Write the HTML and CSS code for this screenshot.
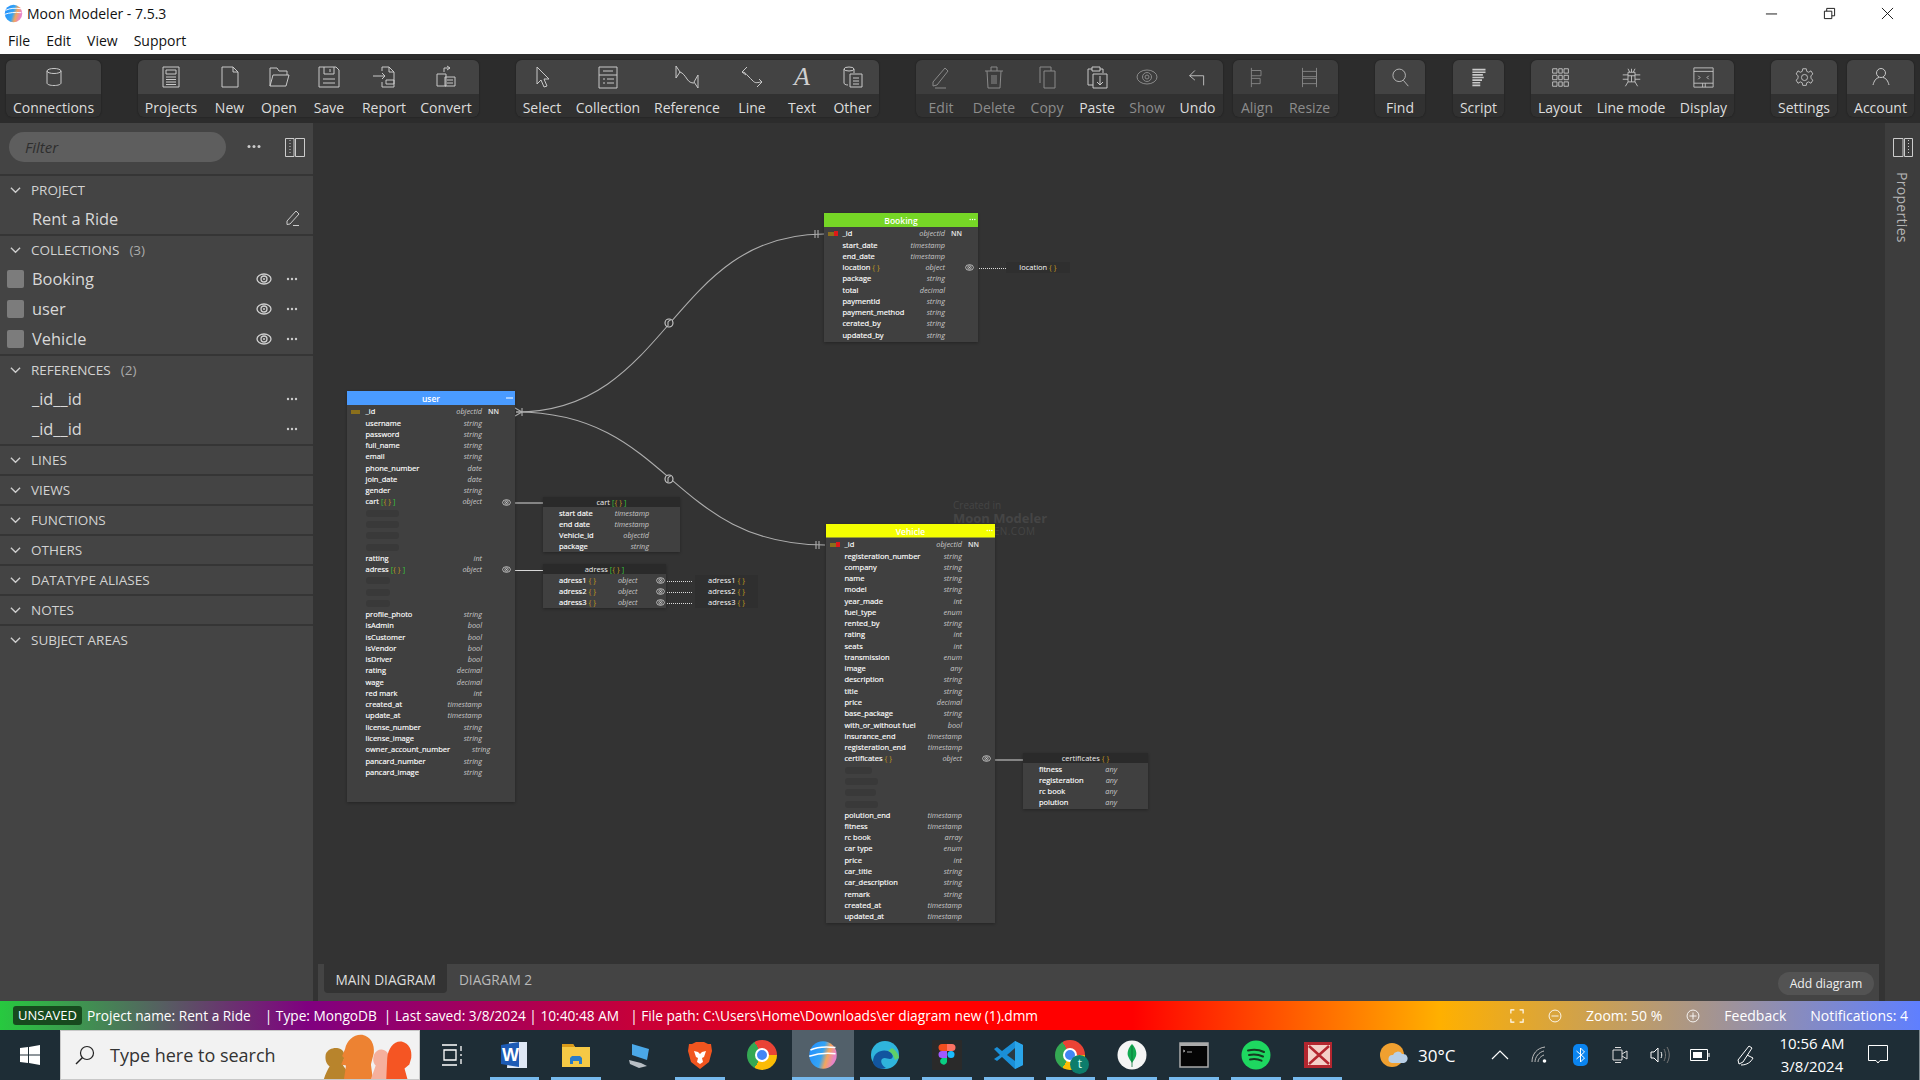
FILE: index.html
```html
<!DOCTYPE html>
<html lang="en">
<head>
    <meta charset="UTF-8">
    <meta name="viewport" content="width=device-width, initial-scale=1.0">
    <title>Moon Modeler - 7.5.3</title>
    <link rel="stylesheet" href="styles.css">
</head>
<body>
    <svg class="defs" width="0" height="0">
        <defs>
            <linearGradient id="moon-a" x1="0" y1="0" x2="1" y2="0.3">
                <stop offset="0" stop-color="#1f8dff"/>
                <stop offset="0.55" stop-color="#35a4f4"/>
                <stop offset="0.75" stop-color="#f3a65c"/>
                <stop offset="1" stop-color="#e884c8"/>
            </linearGradient>
            <symbol id="moon" viewBox="0 0 24 24">
                <circle cx="12" cy="12" r="11" fill="url(#moon-a)"/>
                <path d="M2 8c6-3 12-3 20-2M1 13c6-2 12-3 21-2" stroke="#fff" stroke-width="1.2" fill="none"/>
            </symbol>
            <symbol id="eye" viewBox="0 0 16 12">
                <ellipse cx="8" cy="6" rx="7" ry="5" fill="none" stroke="currentColor" stroke-width="1.3"/>
                <circle cx="8" cy="6" r="3" fill="none" stroke="currentColor" stroke-width="1.3"/>
                <circle cx="8" cy="6" r="1" fill="currentColor"/>
            </symbol>
            <symbol id="dots" viewBox="0 0 12 4">
                <circle cx="2" cy="2" r="1.2" fill="currentColor"/>
                <circle cx="6" cy="2" r="1.2" fill="currentColor"/>
                <circle cx="10" cy="2" r="1.2" fill="currentColor"/>
            </symbol>
            <symbol id="chev" viewBox="0 0 12 8">
                <path d="M1 1.5l5 5 5-5" fill="none" stroke="currentColor" stroke-width="1.5"/>
            </symbol>
        </defs>
    </svg>

    <div class="titlebar">
        <svg class="app-logo"><use href="#moon"/></svg>
        <span class="app-title">Moon Modeler - 7.5.3</span>
        <div class="win-btns">
            <svg class="win-btn" viewBox="0 0 14 14"><path d="M1 7.5h12" stroke="#111"/></svg>
            <svg class="win-btn" viewBox="0 0 14 14"><path d="M1.5 4.5h8v8h-8zM4 4.5V1.5h8.500v8h-3" fill="none" stroke="#111"/></svg>
            <svg class="win-btn" viewBox="0 0 14 14"><path d="M1 1l12 12M13 1L1 13" stroke="#111"/></svg>
        </div>
    </div>
    <div class="menubar">
        <span>File</span><span>Edit</span><span>View</span><span>Support</span>
    </div>

    <div class="toolbar">
        <div class="group g1">
            <div class="tool"><span class="tool-ic"><svg viewBox="0 0 24 24"><ellipse cx="12" cy="6" rx="7" ry="2.500"/><path d="M5 6v12c0 1.500 3 2.500 7 2.500s7-1 7-2.500V6"/></svg></span><span class="tool-lb">Connections</span></div>
        </div>
        <div class="group g2">
            <div class="tool"><span class="tool-ic"><svg viewBox="0 0 24 24"><path d="M4 2h16v20H4zM7 5h10v4H7zM7 12h10M7 14.500h10M7 17h10M7 19.500h10"/></svg></span><span class="tool-lb">Projects</span></div>
            <div class="tool"><span class="tool-ic"><svg viewBox="0 0 24 24"><path d="M4 2h11l5 5v15H4zM15 2v5h5"/></svg></span><span class="tool-lb">New</span></div>
            <div class="tool"><span class="tool-ic"><svg viewBox="0 0 24 24"><path d="M3 21V3h7l2 3h8v4M3 21l3-11h16l-3 11z"/></svg></span><span class="tool-lb">Open</span></div>
            <div class="tool"><span class="tool-ic"><svg viewBox="0 0 24 24"><path d="M2 2h17l3 3v17H2zM7 2v7h10V2M13 4v3M6 14h12M6 18h12"/></svg></span><span class="tool-lb">Save</span></div>
            <div class="tool"><span class="tool-ic"><svg viewBox="0 0 24 24"><path d="M10 6V2h7l5 5v15H10v-5M17 2v5h5M1 11h12M10 8l3 3-3 3M14 15h8v4h-8z"/></svg></span><span class="tool-lb">Report</span></div>
            <div class="tool"><span class="tool-ic"><svg viewBox="0 0 24 24"><path d="M10 7V3h6M13 1l3 2-3 2M3 9h9v12H3zM11 12h10v9H11zM13 15h6M13 18h6"/></svg></span><span class="tool-lb">Convert</span></div>
        </div>
        <div class="group g3">
            <div class="tool"><span class="tool-ic"><svg viewBox="0 0 24 24"><path d="M7 2v17l4-4 3 7 3-1-3-7h5z"/></svg></span><span class="tool-lb">Select</span></div>
            <div class="tool"><span class="tool-ic"><svg viewBox="0 0 24 24"><path d="M3 2h18v21H3zM7 6h10M3 10h18M7 14h2M11 14h7M7 18h2M11 18h7"/></svg></span><span class="tool-lb">Collection</span></div>
            <div class="tool"><span class="tool-ic"><svg class="ic-wide" viewBox="0 0 30 24"><path d="M4 1v12l4-6-4-6M8 7c3 1 5 4 7 7s4 4 7 4M26 10v13l-4-6 4-7"/></svg></span><span class="tool-lb">Reference</span></div>
            <div class="tool"><span class="tool-ic"><svg viewBox="0 0 24 24"><path d="M7 2L2 7l4 3M2 7c3 0 4 2 6 4s3 3 5 5 3 2 8 1M17 22l5-5-3-3"/></svg></span><span class="tool-lb">Line</span></div>
            <div class="tool"><span class="tool-ic"><span class="ic-a">A</span></span><span class="tool-lb">Text</span></div>
            <div class="tool"><span class="tool-ic"><svg viewBox="0 0 24 24"><ellipse cx="8" cy="4" rx="5" ry="2"/><path d="M3 4v14c0 1 1.500 2 4 2M13 4v4M9 9h12v13H9zM12 13h6M12 16h6M12 19h6"/></svg></span><span class="tool-lb">Other</span></div>
        </div>
        <div class="group g4">
            <div class="tool off"><span class="tool-ic"><svg viewBox="0 0 24 24"><path d="M4 17L16 3l3 3L8 20l-4 1zM6 23h11"/></svg></span><span class="tool-lb">Edit</span></div>
            <div class="tool off"><span class="tool-ic"><svg viewBox="0 0 24 24"><path d="M3 6h18M9 6V2h6v4M5 6l1 17h12l1-17M10 10v9M12 10v9M14 10v9"/></svg></span><span class="tool-lb">Delete</span></div>
            <div class="tool off"><span class="tool-ic"><svg viewBox="0 0 24 24"><path d="M5 18V2h11v4M9 6h11v17H9z"/></svg></span><span class="tool-lb">Copy</span></div>
            <div class="tool plain"><span class="tool-ic"><svg viewBox="0 0 24 24"><path d="M8 20H3V4h4M15 4h3v4M7 2h8v4H7zM8 9h14v14H8zM15 11v9M12 17l3 3 3-3"/></svg></span><span class="tool-lb">Paste</span></div>
            <div class="tool off"><span class="tool-ic"><svg viewBox="0 0 24 24"><ellipse cx="12" cy="12" rx="10" ry="7"/><circle cx="12" cy="12" r="4.500"/><circle cx="12" cy="12" r="2"/></svg></span><span class="tool-lb">Show</span></div>
            <div class="tool plain"><span class="tool-ic"><svg class="ic-sm" viewBox="0 0 24 24"><path d="M9 4L3 10l6 5M3 10h16v11"/></svg></span><span class="tool-lb">Undo</span></div>
        </div>
        <div class="group g5">
            <div class="tool off"><span class="tool-ic"><svg class="ic-sm" viewBox="0 0 24 24"><path d="M5 1v22M5 4h11v6H5M5 13h10v6H5"/></svg></span><span class="tool-lb">Align</span></div>
            <div class="tool off"><span class="tool-ic"><svg class="ic-sm" viewBox="0 0 24 24"><path d="M4 1v22M20 1v22M4 5h16v6H4M4 13h16v6H4"/></svg></span><span class="tool-lb">Resize</span></div>
        </div>
        <div class="group g6">
            <div class="tool"><span class="tool-ic"><svg class="ic-xs" viewBox="0 0 24 24"><circle cx="11" cy="10" r="7.500"/><path d="M16 16l6 7"/></svg></span><span class="tool-lb">Find</span></div>
        </div>
        <div class="group g7">
            <div class="tool"><span class="tool-ic"><svg class="ic-sm" viewBox="0 0 24 24"><path class="thick" d="M5 3h15M5 6h15M5 9h12M5 12h13M5 15h11M5 18h9M5 21h9"/></svg></span><span class="tool-lb">Script</span></div>
        </div>
        <div class="group g8">
            <div class="tool"><span class="tool-ic"><svg class="ic-sm" viewBox="0 0 24 24"><path d="M3 2h5v5H3zM10 2h4v5h-4zM16 2h5v5h-5zM3 9.500h5v5H3zM10 9.500h4v5h-4zM16 9.500h5v5h-5zM3 17h5v5H3zM10 17h4v5h-4zM16 17h5v5h-5z"/></svg></span><span class="tool-lb">Layout</span></div>
            <div class="tool"><span class="tool-ic"><svg class="ic-sm" viewBox="0 0 24 24"><path d="M8 6h8v11H8zM8 10h8M12 6V2M8 2l2 4M16 2l-2 4M2 9h6M16 9h6M2 14h6M16 14h6M8 17l-3 5M16 17l3 5M12 10v7"/></svg></span><span class="tool-lb">Line mode</span></div>
            <div class="tool"><span class="tool-ic"><svg class="ic-sm" viewBox="0 0 24 24"><path d="M1 1h22v22H1zM1 5h22M1 18.500h22M11 18.500V23M14 18.500V23M6 10l2 2-2 2M18 10l-2 2 2 2"/></svg></span><span class="tool-lb">Display</span></div>
        </div>
        <div class="group g9">
            <div class="tool"><span class="tool-ic"><svg class="ic-sm" viewBox="0 0 24 24"><path d="M10 2h4l.6 3 2.200 1 2.600-1.600 2.200 3.600-2.300 2 .1 2-.1 1 2.300 2-2.200 3.600-2.600-1.600-2.200 1-.6 3h-4l-.6-3-2.200-1-2.600 1.600-2.200-3.600 2.300-2-.1-1 .1-2-2.300-2 2.200-3.600L7.200 6l2.200-1z"/><circle cx="12" cy="12" r="3.500"/></svg></span><span class="tool-lb">Settings</span></div>
        </div>
        <div class="group g10">
            <div class="tool"><span class="tool-ic"><svg viewBox="0 0 24 24"><circle cx="12" cy="8" r="4.500"/><path d="M4 20c1-4 3-7 6-7.500M20 20c-1-4-3-7-6-7.500"/></svg></span><span class="tool-lb">Account</span></div>
        </div>
    </div>

    <div class="main">
        <div class="sidebar">
            <div class="filter-row">
                <div class="filter">Filter</div>
                <svg class="filter-dots"><use href="#dots"/></svg>
                <svg class="panel-ic" viewBox="0 0 20 19"><path d="M.5.500h8.500v18H.5zM10.500.500h9v18h-9z" fill="none" stroke="#ccc"/><path d="M5 2v15" stroke="#ccc" stroke-dasharray="1 2"/></svg>
            </div>
            <div class="section">
                <div class="sec-head"><svg class="chev"><use href="#chev"/></svg>PROJECT</div>
                <div class="sec-row">Rent a Ride<svg class="row-edit" viewBox="0 0 16 16"><path d="M2 11L11 1l3 3-9 10-3 .5zM8 15.500h6" fill="none" stroke="#ccc"/></svg></div>
            </div>
            <div class="section">
                <div class="sec-head"><svg class="chev"><use href="#chev"/></svg>COLLECTIONS<span class="count">(3)</span></div>
                <div class="sec-row has-box"><span class="box"></span>Booking<svg class="row-eye"><use href="#eye"/></svg><svg class="row-dots"><use href="#dots"/></svg></div>
                <div class="sec-row has-box"><span class="box"></span>user<svg class="row-eye"><use href="#eye"/></svg><svg class="row-dots"><use href="#dots"/></svg></div>
                <div class="sec-row has-box"><span class="box"></span>Vehicle<svg class="row-eye"><use href="#eye"/></svg><svg class="row-dots"><use href="#dots"/></svg></div>
            </div>
            <div class="section">
                <div class="sec-head"><svg class="chev"><use href="#chev"/></svg>REFERENCES<span class="count">(2)</span></div>
                <div class="sec-row">_id__id<svg class="row-dots only"><use href="#dots"/></svg></div>
                <div class="sec-row">_id__id<svg class="row-dots only"><use href="#dots"/></svg></div>
            </div>
            <div class="section"><div class="sec-head"><svg class="chev"><use href="#chev"/></svg>LINES</div></div>
            <div class="section"><div class="sec-head"><svg class="chev"><use href="#chev"/></svg>VIEWS</div></div>
            <div class="section"><div class="sec-head"><svg class="chev"><use href="#chev"/></svg>FUNCTIONS</div></div>
            <div class="section"><div class="sec-head"><svg class="chev"><use href="#chev"/></svg>OTHERS</div></div>
            <div class="section"><div class="sec-head"><svg class="chev"><use href="#chev"/></svg>DATATYPE ALIASES</div></div>
            <div class="section"><div class="sec-head"><svg class="chev"><use href="#chev"/></svg>NOTES</div></div>
            <div class="section"><div class="sec-head"><svg class="chev"><use href="#chev"/></svg>SUBJECT AREAS</div></div>
        </div>

        <div class="center">
            <div class="canvas">
                <div class="watermark">
                    <div class="wm-a">Created in</div>
                    <div class="wm-b">Moon Modeler</div>
                    <div class="wm-c">DATENSEN.COM</div>
                </div>

                <!-- lines use page coordinates -->
                <svg class="lines" viewBox="313 123 1572 841">
                    <g fill="none" stroke="#adadad" stroke-width="1.100">
                        <path d="M516 412C670 412 670 234 824 234"/>
                        <path d="M516 412C670 412 670 545 825 545"/>
                        <path d="M515 408l7 4-7 4M522 408v8"/>
                        <path d="M815 230v8M818 230v8"/>
                        <path d="M816 541v8M819 541v8"/>
                    </g>
                    <g fill="#333" stroke="#d0d0d0" stroke-width="1.100">
                        <circle cx="669" cy="323" r="4"/>
                        <circle cx="669" cy="479" r="4"/>
                    </g>
                    <path d="M668 326v-4q0-1.500 2.500-1.500M668 482v-4q0-1.500 2.500-1.500" fill="none" stroke="#d0d0d0"/>
                    <g stroke="#d8d8d8" stroke-width="1.200">
                        <path d="M515 503h28M515 570.500h28M995 760h28"/>
                    </g>
                    <g stroke="#ddd" stroke-dasharray="1 1" shape-rendering="crispEdges">
                        <path d="M977 268.500h29M667 581.500h26M667 592.500h26M667 603.500h26"/>
                    </g>
                </svg>

                <div class="node node-booking">
                    <div class="node-head head-green">Booking<svg class="head-dots"><use href="#dots"/></svg></div>
                    <ul class="fields">
                        <li class="mk"><i class="key red"></i><span>_id</span><em>objectId</em><b class="nn">NN</b></li>
                        <li><span>start_date</span><em>timestamp</em></li>
                        <li><span>end_date</span><em>timestamp</em></li>
                        <li class="mk"><span>location <u>{ }</u></span><em>object</em><b class="nn right"><svg class="f-eye"><use href="#eye"/></svg></b></li>
                        <li><span>package</span><em>string</em></li>
                        <li><span>total</span><em>decimal</em></li>
                        <li><span>paymentId</span><em>string</em></li>
                        <li><span>payment_method</span><em>string</em></li>
                        <li><span>cerated_by</span><em>string</em></li>
                        <li><span>updated_by</span><em>string</em></li>
                    </ul>
                </div>
                <div class="stub stub-location">location <u>{ }</u></div>

                <div class="node node-user">
                    <div class="node-head head-blue">user<svg class="head-dots"><path d="M0 2h12" stroke="#fff"/></svg></div>
                    <ul class="fields">
                        <li class="mk"><i class="key"></i><span>_id</span><em>objectId</em><b class="nn">NN</b></li>
                        <li><span>username</span><em>string</em></li>
                        <li><span>password</span><em>string</em></li>
                        <li><span>full_name</span><em>string</em></li>
                        <li><span>email</span><em>string</em></li>
                        <li><span>phone_number</span><em>date</em></li>
                        <li><span>join_date</span><em>date</em></li>
                        <li><span>gender</span><em>string</em></li>
                        <li class="mk"><span>cart <s>[</s><u>{ }</u> <s>]</s></span><em>object</em><b class="nn right"><svg class="f-eye"><use href="#eye"/></svg></b></li>
                        <li><i class="bar bar-33"></i></li>
                        <li><i class="bar bar-33"></i></li>
                        <li><i class="bar bar-33"></i></li>
                        <li><i class="bar bar-33"></i></li>
                        <li><span>ratting</span><em>int</em></li>
                        <li class="mk"><span>adress <s>[</s><u>{ }</u> <s>]</s></span><em>object</em><b class="nn right"><svg class="f-eye"><use href="#eye"/></svg></b></li>
                        <li><i class="bar bar-24"></i></li>
                        <li><i class="bar bar-24"></i></li>
                        <li><i class="bar bar-24"></i></li>
                        <li><span>profile_photo</span><em>string</em></li>
                        <li><span>isAdmin</span><em>bool</em></li>
                        <li><span>isCustomer</span><em>bool</em></li>
                        <li><span>isVendor</span><em>bool</em></li>
                        <li><span>isDriver</span><em>bool</em></li>
                        <li><span>rating</span><em>decimal</em></li>
                        <li><span>wage</span><em>decimal</em></li>
                        <li><span>red mark</span><em>int</em></li>
                        <li><span>created_at</span><em>timestamp</em></li>
                        <li><span>update_at</span><em>timestamp</em></li>
                        <li><span>license_number</span><em>string</em></li>
                        <li><span>license_image</span><em>string</em></li>
                        <li><span>owner_account_number</span><em>string</em></li>
                        <li><span>pancard_number</span><em>string</em></li>
                        <li><span>pancard_image</span><em>string</em></li>
                    </ul>
                </div>

                <div class="node sub node-cart">
                    <div class="node-head head-dark">cart <s>[</s><u>{ }</u> <s>]</s></div>
                    <ul class="fields">
                        <li><span>start date</span><em>timestamp</em></li>
                        <li><span>end date</span><em>timestamp</em></li>
                        <li><span>Vehicle_id</span><em>objectId</em></li>
                        <li><span>package</span><em>string</em></li>
                    </ul>
                </div>

                <div class="node sub node-adress">
                    <div class="node-head head-dark">adress <s>[</s><u>{ }</u> <s>]</s></div>
                    <ul class="fields">
                        <li class="mk"><span>adress1 <u>{ }</u></span><em>object</em><b class="nn right"><svg class="f-eye"><use href="#eye"/></svg></b></li>
                        <li class="mk"><span>adress2 <u>{ }</u></span><em>object</em><b class="nn right"><svg class="f-eye"><use href="#eye"/></svg></b></li>
                        <li class="mk"><span>adress3 <u>{ }</u></span><em>object</em><b class="nn right"><svg class="f-eye"><use href="#eye"/></svg></b></li>
                    </ul>
                </div>
                <div class="stubs">
                    <div class="stub">adress1 <u>{ }</u></div>
                    <div class="stub">adress2 <u>{ }</u></div>
                    <div class="stub">adress3 <u>{ }</u></div>
                </div>

                <div class="node node-vehicle">
                    <div class="node-head head-yellow">Vehicle<svg class="head-dots"><use href="#dots"/></svg></div>
                    <ul class="fields">
                        <li class="mk"><i class="key red"></i><span>_id</span><em>objectId</em><b class="nn">NN</b></li>
                        <li><span>registeration_number</span><em>string</em></li>
                        <li><span>company</span><em>string</em></li>
                        <li><span>name</span><em>string</em></li>
                        <li><span>model</span><em>string</em></li>
                        <li><span>year_made</span><em>int</em></li>
                        <li><span>fuel_type</span><em>enum</em></li>
                        <li><span>rented_by</span><em>string</em></li>
                        <li><span>rating</span><em>int</em></li>
                        <li><span>seats</span><em>int</em></li>
                        <li><span>transmission</span><em>enum</em></li>
                        <li><span>image</span><em>any</em></li>
                        <li><span>description</span><em>string</em></li>
                        <li><span>title</span><em>string</em></li>
                        <li><span>price</span><em>decimal</em></li>
                        <li><span>base_package</span><em>string</em></li>
                        <li><span>with_or_without fuel</span><em>bool</em></li>
                        <li><span>insurance_end</span><em>timestamp</em></li>
                        <li><span>registeration_end</span><em>timestamp</em></li>
                        <li class="mk"><span>certificates <u>{ }</u></span><em>object</em><b class="nn right"><svg class="f-eye"><use href="#eye"/></svg></b></li>
                        <li><i class="bar bar-27"></i></li>
                        <li><i class="bar bar-33"></i></li>
                        <li><i class="bar bar-31"></i></li>
                        <li><i class="bar bar-33"></i></li>
                        <li><span>polution_end</span><em>timestamp</em></li>
                        <li><span>fitness</span><em>timestamp</em></li>
                        <li><span>rc book</span><em>array</em></li>
                        <li><span>car type</span><em>enum</em></li>
                        <li><span>price</span><em>int</em></li>
                        <li><span>car_title</span><em>string</em></li>
                        <li><span>car_description</span><em>string</em></li>
                        <li><span>remark</span><em>string</em></li>
                        <li><span>created_at</span><em>timestamp</em></li>
                        <li><span>updated_at</span><em>timestamp</em></li>
                    </ul>
                </div>

                <div class="node sub node-certs">
                    <div class="node-head head-dark">certificates <u>{ }</u></div>
                    <ul class="fields">
                        <li><span>fitness</span><em>any</em></li>
                        <li><span>registeration</span><em>any</em></li>
                        <li><span>rc book</span><em>any</em></li>
                        <li><span>polution</span><em>any</em></li>
                    </ul>
                </div>
            </div>
            <div class="tabs">
                <div class="tab active">MAIN DIAGRAM</div>
                <div class="tab">DIAGRAM 2</div>
                <div class="add-diagram">Add diagram</div>
            </div>
        </div>

        <div class="props">
            <svg class="panel-ic" viewBox="0 0 20 19"><path d="M.5.500h9.500v18H.5zM11.500.500h8v18h-8z" fill="none" stroke="#ccc"/><path d="M15.500 2v15" stroke="#ccc" stroke-dasharray="1 2"/></svg>
            <span class="props-label">Properties</span>
        </div>
    </div>

    <div class="status">
        <span class="unsaved">UNSAVED</span>
        <span class="st-name">Project name: Rent a Ride</span>
        <span class="st-type">| Type: MongoDB</span>
        <span class="st-saved">| Last saved: 3/8/2024 | 10:40:48 AM</span>
        <span class="st-path">| File path: C:\Users\Home\Downloads\er diagram new (1).dmm</span>
        <div class="st-right">
            <svg class="st-ic" viewBox="0 0 16 16"><path d="M1 5V1h4M11 1h4v4M15 11v4h-4M5 15H1v-4" fill="none" stroke="#fff" stroke-width="1.300"/></svg>
            <svg class="st-ic" viewBox="0 0 16 16"><circle cx="8" cy="8" r="6.800" fill="none" stroke="#fff"/><path d="M4 8h8" stroke="#fff"/></svg>
            <span>Zoom: 50 %</span>
            <svg class="st-ic" viewBox="0 0 16 16"><circle cx="8" cy="8" r="6.800" fill="none" stroke="#fff"/><path d="M4 8h8M8 4v8" stroke="#fff"/></svg>
            <span>Feedback</span>
            <span>Notifications: 4</span>
        </div>
    </div>

    <div class="taskbar">
        <div class="start">
            <svg viewBox="0 0 20 20" width="20" height="20"><path d="M0 3l8-1v7.500H0zM9 1.900L20 0v9.500H9zM0 10.500h8V18l-8-1zM9 10.500h11V20L9 18.100z" fill="#fff"/></svg>
        </div>
        <div class="search">
            <svg class="search-ic" viewBox="0 0 20 20"><circle cx="12" cy="8" r="6.500" fill="none" stroke="#222" stroke-width="1.200"/><path d="M7.500 12.500L1 19" stroke="#222" stroke-width="1.400"/></svg>
            <span class="search-text">Type here to search</span>
            <svg class="people" viewBox="0 0 100 50">
                <path fill="#b8842c" d="M3 50c2-6 4-10 6-13-4-3-5-8-4-13 2-5 8-7 13-6 5 1 7 5 6 10l-1 8 3 4 2 10z"/>
                <path fill="#ed8232" d="M24 50l2-14-5-1 3-7-2-2 3-7c2-10 10-16 18-15 9 2 13 10 12 19l-3 12 2 15z"/>
                <path fill="#f5b09c" d="M52 50l5-14c-3-3-3-7-2-11 2-5 7-7 11-5 4 2 6 6 5 11l2 19z"/>
                <path fill="#f55523" d="M68 50l1-22c1-10 7-18 15-17 8 2 11 9 10 17l-2 7-5 4 3 11z"/>
            </svg>
        </div>
        <div class="tb-item">
            <svg class="tb-task" viewBox="0 0 22 22"><path d="M1 1h15M1 21h15M3 6h12v10H3zM20 2v5M20 10v2M20 15v5" fill="none" stroke="#fff" stroke-width="1.300"/></svg>
        </div>
        <div class="apps">
            <div class="app on"><svg viewBox="0 0 30 30"><path d="M10 2h18v26H8z" fill="#dfe8f5"/><path d="M2 5l18-3v25L2 24z" fill="#1d5bb5"/><text x="3" y="21" class="app-w">W</text></svg></div>
            <div class="app on"><svg viewBox="0 0 30 30"><path d="M1 4h11l2 3h15v20H1z" fill="#f6c945"/><path d="M1 4h11l2 3H1z" fill="#d99a1a"/><path d="M9 24v-6l2-2h8l2 2v6h-3v-3h-6v3z" fill="#2a7cc7"/></svg></div>
            <div class="app"><svg viewBox="0 0 30 30"><path d="M9 4l17 5-2 11L9 15z" fill="#4ba8e8"/><path d="M6 20l12 3 6 3-8 2-9-4z" fill="#b8bec4"/></svg></div>
            <div class="app on"><svg viewBox="0 0 30 30"><path d="M7 4l4-2h8l4 2 3 0 1 7-3 11-9 7-9-7-3-11 1-7z" fill="#f1551f"/><path d="M9 11l4 1 2 2 2-2 4-1-2 6-2 1 1 4-3 2-3-2 1-4-2-1z" fill="#fff"/></svg></div>
            <div class="app"><span class="chrome"><span></span></span></div>
            <div class="app active"><svg viewBox="0 0 30 30"><use href="#moon"/></svg></div>
            <div class="app on"><svg viewBox="0 0 30 30"><circle cx="15" cy="15" r="14" fill="#2fb4dc"/><path d="M3 22C3 12 12 9 18 11c6 2 6 8 2 8-3 0-5-2-8 0-2 2 0 7 4 9C9 30 4 27 3 22z" fill="#12559f"/><path d="M22 8c4 2 7 7 7 10l-4 2c-1-3-3-8-7-9z" fill="#5fd068"/></svg></div>
            <div class="app on"><svg viewBox="0 0 30 30"><rect width="30" height="30" rx="1" fill="#2a2a2a"/><path d="M10 4h5v7h-5a3.500 3.500 0 0 1 0-7z" fill="#f24e1e"/><path d="M15 4h5a3.500 3.500 0 0 1 0 7h-5z" fill="#ff7262"/><path d="M10 11h5v7h-5a3.500 3.500 0 0 1 0-7z" fill="#a259ff"/><circle cx="19" cy="14.500" r="3.500" fill="#1abcfe"/><path d="M10 18h5v4a3.500 3.500 0 1 1-5-4z" fill="#0acf83"/></svg></div>
            <div class="app on"><svg viewBox="0 0 30 30"><path d="M21 1l8 4v20l-8 4L8 17l-5 4-3-2 6-4-6-6 3-2 5 4z" fill="#1a8fd8"/><path d="M21 8l-8 7 8 6z" fill="#2a3a44"/><path d="M21 1l8 4v20l-8 4z" fill="#2aa5ea"/></svg></div>
            <div class="app on"><span class="chrome"><span></span><i class="chrome-badge">t</i></span></div>
            <div class="app on"><svg viewBox="0 0 30 30"><circle cx="15" cy="15" r="14.500" fill="#f5f5f5"/><path d="M15 4c4 4 5 9 4 12-1 3-3 5-4 7-1-2-3-4-4-7-1-3 0-8 4-12z" fill="#13aa52"/><path d="M15 6v21" stroke="#0b6e35" stroke-width=".8"/></svg></div>
            <div class="app on"><svg viewBox="0 0 30 30"><rect x="1" y="3" width="28" height="24" fill="#050505" stroke="#aaa" stroke-width="1.500"/><path d="M1 3h28v3H1z" fill="#aaa"/><path d="M4 10l2 1-2 1M8 12h5" stroke="#ccc" stroke-width=".8" fill="none"/></svg></div>
            <div class="app on"><svg viewBox="0 0 30 30"><circle cx="15" cy="15" r="14.500" fill="#1ed760"/><path d="M7 10.500c6-1.500 11-1 16 1.500M8 15c5-1 9-.8 14 1.500M9 19.500c4-.8 8-.5 11.500 1.200" fill="none" stroke="#163a20" stroke-width="2" stroke-linecap="round"/></svg></div>
            <div class="app on"><svg viewBox="0 0 30 30"><rect x="1" y="2" width="28" height="26" fill="#b3262f"/><rect x="5" y="5" width="22" height="20" fill="#f4cfc8"/><path d="M6 6l20 18M26 6L6 24" stroke="#b3262f" stroke-width="2.500"/></svg></div>
        </div>
        <div class="weather">
            <svg viewBox="0 0 28 28" width="28" height="28"><circle cx="12" cy="14" r="12" fill="#f0a030"/><path d="M12 22a4 4 0 0 1 1-8 5 5 0 0 1 9-1 4.500 4.500 0 0 1 2 9z" fill="#b9cfe6"/></svg>
            <span>30°C</span>
        </div>
        <div class="tray">
            <div class="tray-it"><svg viewBox="0 0 18 12" width="18" height="12"><path d="M1 10l8-8 8 8" fill="none" stroke="#fff" stroke-width="1.200"/></svg></div>
            <div class="tray-it"><svg viewBox="0 0 18 18" width="18" height="18"><path d="M1 16C1 8 6 2 14 1M4 16c0-5 4-10 9-11M7 16c0-3 3-6 6-7" fill="none" stroke="#bbb"/><circle cx="13.500" cy="15" r="1.800" fill="#fff"/></svg></div>
            <div class="tray-it"><svg viewBox="0 0 15 22" width="15" height="22"><rect width="15" height="22" rx="5" fill="#0a84f0"/><path d="M3.500 7l8 7-4 4V4l4 4-8 7" fill="none" stroke="#fff"/></svg></div>
            <div class="tray-it"><svg viewBox="0 0 16 20" width="16" height="20"><path d="M1 5h9v10H1zM10 9l5-3v8l-5-3M3 2.500h6M3 17.500h6" fill="none" stroke="#ddd"/></svg></div>
            <div class="tray-it"><svg viewBox="0 0 20 18" width="20" height="18"><path d="M1 6h3l4-4v14l-4-4H1zM11 6c1 2 1 4 0 6" fill="none" stroke="#fff"/><path d="M14 3c2 4 2 8 0 12M17 1c3 5 3 11 0 16" fill="none" stroke="#777"/></svg></div>
            <div class="tray-it"><svg viewBox="0 0 20 12" width="20" height="12"><path d="M.5.500h17v11H.5z" fill="none" stroke="#fff"/><path d="M3 3h9v6H3z" fill="#fff"/><path d="M19 4v4" stroke="#fff"/></svg></div>
            <div class="tray-it pen"><svg viewBox="0 0 20 22" width="20" height="22"><path d="M3 20l-1-4L13 2l3 2L7 18zM5 21c6 0 10-3 12-7l-6-3" fill="none" stroke="#fff"/></svg></div>
            <div class="clock"><div>10:56 AM</div><div>3/8/2024</div></div>
            <div class="notif"><svg viewBox="0 0 20 20" width="20" height="20"><path d="M.5.500h19v15H12l-2 2.500-2-2.500H.5z" fill="none" stroke="#fff"/></svg></div>
        </div>
    </div>
</body>
</html>
```

FILE: styles.css
```css
* {
    box-sizing: border-box;
}

body {
    margin: 0;
    width: 1920px;
    height: 1080px;
    overflow: hidden;
    display: flex;
    flex-direction: column;
    font-family: "Open Sans", sans-serif;
    background-color: #333;
    color: #ddd;
}

.defs {
    position: absolute;
}

/* window title and menu */
.titlebar {
    height: 27px;
    display: flex;
    align-items: center;
    background-color: #fff;
    color: #111;
    font-size: 14px;
    padding-left: 4px;
}

.app-logo {
    width: 19px;
    height: 19px;
    margin-right: 4px;
}

.win-btns {
    margin-left: auto;
    display: flex;
    gap: 45px;
    padding-right: 26px;
}

.win-btn {
    width: 13px;
    height: 13px;
}

.menubar {
    height: 27px;
    display: flex;
    align-items: center;
    gap: 16px;
    padding-left: 8px;
    background-color: #fff;
    color: #111;
    font-size: 14px;
}

/* toolbar */
.toolbar {
    height: 69px;
    display: flex;
    padding: 6px 0 0 6px;
    background-color: #2c2c2c;
}

.group {
    height: 57px;
    display: grid;
    border-radius: 6px;
    overflow: hidden;
    background-color: #313131;
    box-shadow: 0 0 2px rgba(0, 0, 0, 0.4);
    margin-left: 37px;
}

.g1 { width: 95px; margin-left: 0; grid-template-columns: 95px; }
.g2 { width: 341px; grid-template-columns: 66px 51px 48px 52px 58px 66px; }
.g3 { width: 363px; grid-template-columns: 52px 80px 78px 52px 48px 53px; }
.g4 { width: 307px; grid-template-columns: 50px 56px 50px 50px 50px 51px; }
.g5 { width: 105px; margin-left: 10px; grid-template-columns: 48px 57px; }
.g6 { width: 50px; grid-template-columns: 50px; }
.g7 { width: 51px; margin-left: 28px; grid-template-columns: 51px; }
.g8 { width: 203px; margin-left: 27px; grid-template-columns: 58px 84px 61px; }
.g9 { width: 66px; grid-template-columns: 66px; }
.g10 { width: 67px; margin-left: 10px; grid-template-columns: 67px; }

.tool {
    display: flex;
    flex-direction: column;
    align-items: stretch;
    text-align: center;
    min-width: 0;
    grid-row: 1;
}

.tool-ic {
    height: 34px;
    display: flex;
    align-items: center;
    justify-content: center;
    background-color: #434343;
}

.tool-ic svg {
    width: 24px;
    height: 24px;
    fill: none;
    stroke: #c9c9c9;
    stroke-width: 1;
}

.tool-ic .ic-wide {
    width: 30px;
}

.tool-ic .ic-sm {
    width: 21px;
    height: 21px;
}

.tool-ic .ic-xs {
    width: 20px;
    height: 20px;
}

.tool-ic .thick {
    stroke-width: 1.800;
}

.ic-a {
    font-family: "Liberation Serif", serif;
    font-style: italic;
    font-size: 26px;
    line-height: 30px;
    color: #cfcfcf;
}

.tool-lb {
    flex: 1;
    font-size: 14px;
    line-height: 23px;
    padding-top: 2px;
    white-space: nowrap;
    color: #ddd;
}

.tool.off .tool-ic,
.tool.plain .tool-ic {
    background-color: #3d3d3d;
}

.tool.off .tool-ic svg {
    stroke: #8a8a8a;
}

.tool.off .tool-lb {
    color: #8c8c8c;
}

/* main area */
.main {
    height: 878px;
    display: flex;
}

.sidebar {
    width: 313px;
    flex: none;
    background-color: #444;
}

.filter-row {
    height: 51px;
    display: flex;
    align-items: flex-start;
    padding: 9px 0 0 9px;
}

.filter {
    width: 217px;
    height: 30px;
    line-height: 30px;
    padding-left: 16px;
    border-radius: 15px;
    background-color: #5e5e5e;
    color: #2e2e2e;
    font-style: italic;
    font-size: 15px;
}

.filter-dots {
    width: 16px;
    height: 5px;
    margin: 12px 0 0 20px;
    color: #ccc;
}

.panel-ic {
    width: 20px;
    height: 19px;
    margin: 6px 0 0 23px;
}

.section {
    border-top: 2px solid #353535;
}

.sec-head {
    height: 28px;
    display: flex;
    align-items: center;
    padding-left: 10px;
    font-size: 13.500px;
    color: #d2d2d2;
}

.chev {
    width: 11px;
    height: 8px;
    margin-right: 10px;
    color: #ccc;
}

.count {
    margin-left: 10px;
    color: #aaa;
}

.sec-row {
    height: 30px;
    display: flex;
    align-items: center;
    padding: 0 0 2px 32px;
    font-size: 16.400px;
    color: #d8d8d8;
}

.sec-row.has-box {
    padding-left: 7px;
}

.box {
    width: 17px;
    height: 18px;
    margin: 2px 8px 0 0;
    border-radius: 2px;
    background-color: #7c7c7c;
}

.row-eye {
    width: 16px;
    height: 12px;
    margin: 1px 0 0 auto;
    color: #cfcfcf;
}

.row-dots {
    width: 12px;
    height: 4px;
    margin: 1px 15px 0 14px;
    color: #ccc;
}

.row-dots.only {
    margin-left: auto;
}

.row-edit {
    width: 16px;
    height: 16px;
    margin-left: auto;
    margin-right: 12px;
}

.center {
    flex: 1;
    display: flex;
    flex-direction: column;
    min-width: 0;
}

/* diagram canvas, nodes sit at their own place on it */
.canvas {
    height: 841px;
    position: relative;
    overflow: hidden;
    background-color: #333;
    font-size: 7.500px;
}

.lines {
    position: absolute;
    left: 0;
    top: 0;
    width: 1572px;
    height: 841px;
}

.watermark {
    position: absolute;
    left: 640px;
    top: 376px;
    color: #454545;
    white-space: nowrap;
}

.wm-a {
    font-size: 10px;
    line-height: 12px;
}

.wm-b {
    font-size: 13px;
    line-height: 14px;
    font-weight: 700;
}

.wm-c {
    font-size: 10px;
    line-height: 12px;
    letter-spacing: 0.5px;
}

.node {
    position: absolute;
    background-color: #404040;
    box-shadow: 0 1px 3px rgba(0, 0, 0, 0.3);
    --rt: 33px;
}

.node.sub {
    --rt: 31px;
}

.node-user { left: 34px; top: 268px; width: 168px; height: 411px; }
.node-booking { left: 511px; top: 90px; width: 154px; height: 129px; }
.node-vehicle { left: 513px; top: 401px; width: 169px; height: 399px; }
.node-cart { left: 230px; top: 374px; width: 137px; height: 55px; }
.node-adress { left: 230px; top: 441px; width: 123px; height: 44px; }
.node-certs { left: 710px; top: 630px; width: 125px; height: 56px; }

.node-head {
    height: 14px;
    line-height: 15px;
    text-align: center;
    font-size: 8.500px;
    font-weight: 600;
    color: #fff;
    position: relative;
}

.head-blue { background-color: #4a9bff; }
.head-green { background-color: #76d626; }
.head-yellow { background-color: #f4ff00; border-bottom: 1px solid #9aa030; }

.head-dark {
    height: 10px;
    line-height: 11px;
    font-size: 7.500px;
    font-weight: 400;
    background-color: #2a2a2a;
    color: #eee;
}

.head-dots {
    position: absolute;
    right: 2px;
    top: 5px;
    width: 7px;
    height: 3px;
    color: #fff;
}

.fields {
    list-style: none;
    margin: 0;
    padding: 1.300px 0 0 18.500px;
}

.sub .fields {
    padding: 0.500px 0 0 16px;
}

.fields li {
    height: 11.270px;
    line-height: 11.270px;
    display: flex;
    align-items: center;
    white-space: nowrap;
    position: relative;
}

.fields li::after {
    content: "";
    flex: 0 1 var(--rt);
}

.fields li.mk::after {
    display: none;
}

.fields span {
    flex: 1 0 auto;
    color: #fff;
    -webkit-text-stroke: 0.15px #fff;
}

.fields em {
    flex: none;
    margin-left: 22px;
    font-size: 7.300px;
    color: #c8c8c8;
}

.nn {
    flex: 0 0 var(--rt);
    display: flex;
    padding-left: 6px;
    font-size: 7px;
    font-weight: 600;
    color: #e8e8e8;
}

.nn.right {
    justify-content: flex-end;
    padding-right: 4px;
}

.f-eye {
    width: 9px;
    height: 7px;
    color: #e0e0e0;
}

.fields u,
.stub u,
.head-dark u {
    text-decoration: none;
    color: #c39a1d;
    -webkit-text-stroke: 0;
}

.fields s,
.head-dark s {
    text-decoration: none;
    color: #39c23a;
    -webkit-text-stroke: 0;
}

.key {
    position: absolute;
    left: -15px;
    top: 3.500px;
    width: 9px;
    height: 4px;
    background-color: #8a6f1c;
}

.key.red::after {
    content: "";
    position: absolute;
    right: -1px;
    top: -0.500px;
    width: 4px;
    height: 5px;
    background-color: #e01818;
}

.bar {
    height: 7px;
    border-radius: 3px;
    background-color: #393939;
    margin-right: auto;
}

.bar-24 { width: 24px; }
.bar-27 { width: 27px; }
.bar-31 { width: 31px; }
.bar-33 { width: 33px; }

.stub {
    height: 11px;
    line-height: 11px;
    width: 63px;
    text-align: center;
    background-color: #2f2f2f;
    color: #f8f8f8;
    white-space: nowrap;
}

.stub-location {
    position: absolute;
    left: 693px;
    top: 139px;
    width: 64px;
}

.stubs {
    position: absolute;
    left: 382px;
    top: 452px;
}

/* diagram tabs */
.tabs {
    height: 37px;
    margin: 0 6px 0 5px;
    display: flex;
    background-color: #444;
    font-size: 13.700px;
    padding-left: 6px;
}

.tab {
    height: 29px;
    line-height: 31px;
    padding: 0 11.500px;
    color: #b9b9b9;
}

.tab.active {
    background-color: #333;
    border-radius: 0 0 4px 4px;
    color: #ddd;
}

.add-diagram {
    margin: 8px 5px 0 auto;
    width: 96px;
    height: 23px;
    line-height: 23px;
    text-align: center;
    font-size: 12.200px;
    border-radius: 12px;
    background-color: #535353;
    color: #f0f0f0;
}

/* properties rail */
.props {
    width: 35px;
    flex: none;
    background-color: #3d3d3d;
    display: flex;
    flex-direction: column;
    align-items: center;
}

.props .panel-ic {
    margin: 15px 0 0 0;
}

.props-label {
    writing-mode: vertical-rl;
    margin-top: 15px;
    font-size: 14px;
    letter-spacing: 0.3px;
    color: #b5b5b5;
}

/* status bar */
.status {
    height: 29px;
    display: flex;
    align-items: center;
    background: linear-gradient(90deg, #27c93f 0%, #800080 16%, #ff0000 47%, #ff0000 59%, #ffb000 75%, #5f7fff 100%);
    color: #fff;
    font-size: 13.700px;
    padding-left: 13px;
    white-space: nowrap;
}

.unsaved {
    width: 69px;
    height: 19px;
    line-height: 19px;
    text-align: center;
    font-size: 13px;
    border-radius: 3px;
    background-color: #174a1e;
    margin-right: 5px;
}

.st-type { margin-left: 14px; }
.st-saved { margin-left: 7px; }
.st-path { margin-left: 11px; }

.st-right {
    margin-left: auto;
    display: flex;
    align-items: center;
    gap: 24px;
    padding-right: 12px;
    font-size: 14px;
}

.st-ic {
    width: 14px;
    height: 14px;
}

/* windows taskbar */
.taskbar {
    height: 50px;
    display: flex;
    align-items: center;
    background-color: #1e2d36;
    color: #fff;
}

.start {
    width: 60px;
    display: flex;
    justify-content: center;
}

.search {
    width: 360px;
    height: 50px;
    display: flex;
    align-items: center;
    position: relative;
    background-color: #f2f2f2;
    border: 1px solid #c8c8c8;
    color: #333;
    overflow: hidden;
}

.search-ic {
    width: 20px;
    height: 20px;
    margin-left: 14px;
}

.search-text {
    margin-left: 15px;
    font-size: 18px;
}

.people {
    position: absolute;
    right: 0;
    bottom: 0;
    width: 100px;
    height: 48px;
}

.tb-item {
    width: 63.500px;
    display: flex;
    justify-content: center;
}

.tb-task {
    width: 22px;
    height: 22px;
}

.apps {
    display: flex;
    width: 865px;
}

.app {
    width: 61.800px;
    height: 50px;
    display: flex;
    align-items: center;
    justify-content: center;
    position: relative;
}

.app svg {
    width: 30px;
    height: 30px;
}

.app.on::after,
.app.active::after {
    content: "";
    position: absolute;
    left: 6px;
    right: 6px;
    bottom: 0;
    height: 3px;
    background-color: #76b9ed;
}

.app.active {
    background-color: #52606a;
}

.app.active::after {
    left: 0;
    right: 0;
}

.app-w {
    font-family: "Liberation Sans", sans-serif;
    font-weight: 700;
    font-size: 18px;
    fill: #fff;
}

.chrome {
    width: 30px;
    height: 30px;
    border-radius: 50%;
    position: relative;
    display: flex;
    align-items: center;
    justify-content: center;
    background: conic-gradient(from 330deg, #ea4335 0 120deg, #fbbc05 120deg 240deg, #34a853 240deg 360deg);
}

.chrome span {
    width: 14px;
    height: 14px;
    border-radius: 50%;
    background-color: #4285f4;
    border: 2px solid #fff;
}

.chrome-badge {
    position: absolute;
    right: -4px;
    bottom: -4px;
    width: 19px;
    height: 19px;
    line-height: 18px;
    text-align: center;
    border-radius: 50%;
    font-style: normal;
    font-size: 12px;
    background-color: #0d7d6c;
    color: #cfe;
}

.weather {
    width: 100px;
    margin-left: 31.500px;
    display: flex;
    align-items: center;
    gap: 10px;
    font-size: 17px;
}

.tray {
    display: flex;
    align-items: center;
    height: 50px;
    padding-right: 15px;
    border-right: 1px solid #7f8a90;
}

.tray-it {
    width: 40px;
    display: flex;
    justify-content: center;
}

.tray-it.pen {
    width: 52px;
}

.clock {
    width: 80px;
    text-align: center;
    font-size: 15px;
    line-height: 23px;
}

.notif {
    width: 52px;
    display: flex;
    justify-content: center;
}
```
